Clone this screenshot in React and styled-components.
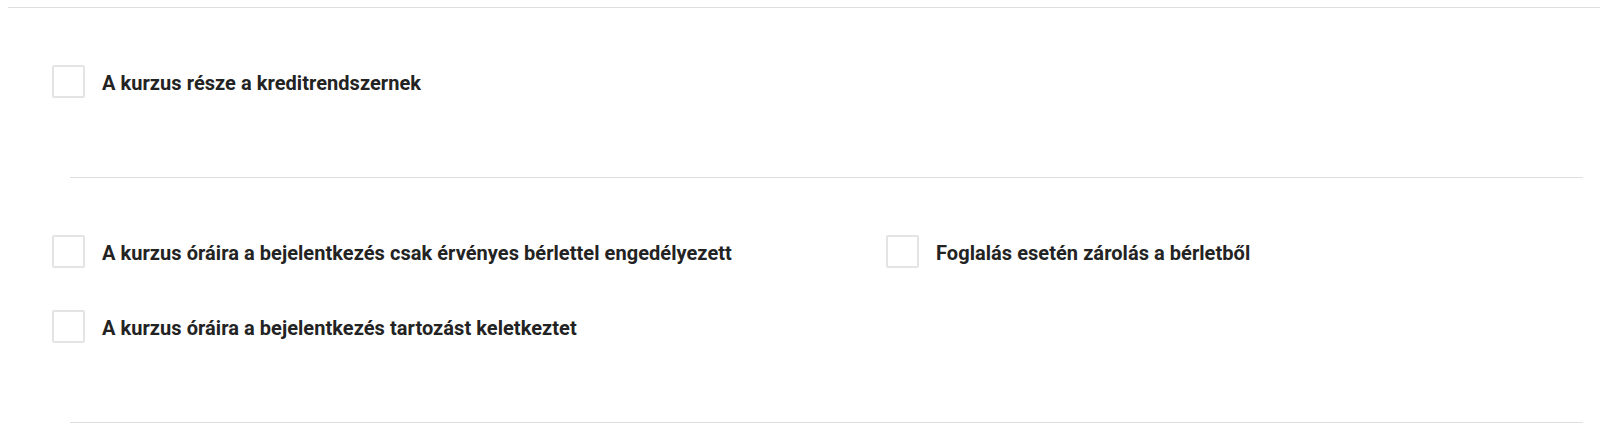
import React from 'react';
import styled, { createGlobalStyle } from 'styled-components';

const GlobalStyle = createGlobalStyle`
  body {
    margin: 0;
    background: #ffffff;
    font-family: Roboto, "Liberation Sans", sans-serif;
  }
`;

const Page = styled.div`
  padding: 7px 0 0 8px;
`;

const TopRule = styled.div`
  border-top: 1px solid #dedede;
`;

const Section = styled.div`
  display: grid;
  grid-template-columns: 834px 1fr;
  row-gap: 42px;
  padding: 57px 0 79px 44px;
`;

const Divider = styled.hr`
  margin: 0 17px 0 62px;
  border: 0;
  border-top: 1px solid #dedede;
`;

const Option = styled.label`
  display: flex;
  align-items: center;
  gap: 17px;
  cursor: pointer;
`;

const Box = styled.input.attrs({ type: 'checkbox' })`
  appearance: none;
  margin: 0;
  width: 33px;
  height: 33px;
  flex-shrink: 0;
  border: 2px solid #e4e4e4;
  border-radius: 2px;
  background: #fff;
`;

const Label = styled.span`
  padding-top: 2px;
  font-size: 20px;
  font-weight: 700;
  letter-spacing: 0.05px;
  color: #232323;
`;

const CheckOption = ({ children }) => (
  <Option>
    <Box />
    <Label>{children}</Label>
  </Option>
);

export default function App() {
  return (
    <>
      <GlobalStyle />
      <Page>
        <TopRule />
        <Section>
          <CheckOption>A kurzus része a kreditrendszernek</CheckOption>
        </Section>
        <Divider />
        <Section>
          <CheckOption>A kurzus óráira a bejelentkezés csak érvényes bérlettel engedélyezett</CheckOption>
          <CheckOption>Foglalás esetén zárolás a bérletből</CheckOption>
          <CheckOption>A kurzus óráira a bejelentkezés tartozást keletkeztet</CheckOption>
        </Section>
        <Divider />
      </Page>
    </>
  );
}
